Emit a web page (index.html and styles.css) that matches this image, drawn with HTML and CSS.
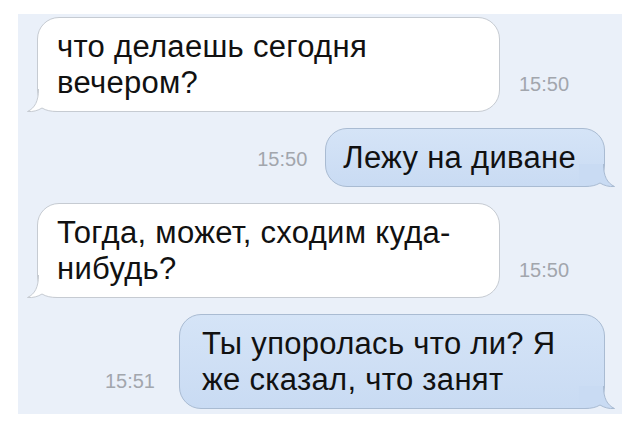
FILE: index.html
```html
<!DOCTYPE html>
<html lang="ru">
<head>
  <meta charset="UTF-8" />
  <meta name="viewport" content="width=device-width, initial-scale=1.0"/>
  <title>Сообщения</title>
  <link rel="stylesheet" href="styles.css">
</head>
<body>
  <div class="chat">
    <div class="row in">
      <div class="bubble wide">
        <span class="text">что делаешь сегодня вечером?</span>
        <svg class="tail" width="36" height="23" viewBox="0 0 36 23">
          <path class="tail-fill" d="M11.5 0 C11.5 12 8 19 0.5 22.5 C6 23 11 21.5 15 19 C19 21.5 24 22.5 30 22.5 L36 22.5 L36 0 Z"/>
          <path class="tail-line" d="M11.5 0 C11.5 12 8 19 0.5 22.5 C6 23 11 21.5 15 19 C19 21.5 24 22.5 30 22.5 L36 22.5"/>
        </svg>
      </div>
      <span class="time">15:50</span>
    </div>

    <div class="row out">
      <span class="time">15:50</span>
      <div class="bubble">
        <span class="text">Лежу на диване</span>
        <svg class="tail" width="36" height="23" viewBox="0 0 36 23">
          <path class="tail-fill" d="M11.5 0 C11.5 12 8 19 0.5 22.5 C6 23 11 21.5 15 19 C19 21.5 24 22.5 30 22.5 L36 22.5 L36 0 Z"/>
          <path class="tail-line" d="M11.5 0 C11.5 12 8 19 0.5 22.5 C6 23 11 21.5 15 19 C19 21.5 24 22.5 30 22.5 L36 22.5"/>
        </svg>
      </div>
    </div>

    <div class="row in">
      <div class="bubble wide">
        <span class="text">Тогда, может, сходим куда-нибудь?</span>
        <svg class="tail" width="36" height="23" viewBox="0 0 36 23">
          <path class="tail-fill" d="M11.5 0 C11.5 12 8 19 0.5 22.5 C6 23 11 21.5 15 19 C19 21.5 24 22.5 30 22.5 L36 22.5 L36 0 Z"/>
          <path class="tail-line" d="M11.5 0 C11.5 12 8 19 0.5 22.5 C6 23 11 21.5 15 19 C19 21.5 24 22.5 30 22.5 L36 22.5"/>
        </svg>
      </div>
      <span class="time">15:50</span>
    </div>

    <div class="row out last">
      <span class="time">15:51</span>
      <div class="bubble long">
        <span class="text">Ты упоролась что ли? Я же сказал, что занят</span>
        <svg class="tail" width="36" height="23" viewBox="0 0 36 23">
          <path class="tail-fill" d="M11.5 0 C11.5 12 8 19 0.5 22.5 C6 23 11 21.5 15 19 C19 21.5 24 22.5 30 22.5 L36 22.5 L36 0 Z"/>
          <path class="tail-line" d="M11.5 0 C11.5 12 8 19 0.5 22.5 C6 23 11 21.5 15 19 C19 21.5 24 22.5 30 22.5 L36 22.5"/>
        </svg>
      </div>
    </div>
  </div>
</body>
</html>
```

FILE: styles.css
```css
body {
  margin: 0;
  background: #ffffff;
  font-family: "Liberation Sans", Arial, sans-serif;
}
.chat {
  margin: 14px 18px 0;
  padding: 3px 0 5px;
  background: #eaf0f9;
  display: flex;
  flex-direction: column;
  gap: 16px;
}
.row {
  display: flex;
  align-items: flex-end;
}
.row.in {
  padding-left: 19px;
}
.row.out {
  justify-content: flex-end;
  padding-right: 17px;
}
.bubble {
  position: relative;
  box-sizing: border-box;
  padding: 11px 28px 10px 19px;
  border: 1px solid #c6cbd2;
  border-radius: 22px;
  background: #ffffff;
  color: #111;
  font-size: 31px;
  letter-spacing: 0.3px;
  line-height: 36px;
}
.bubble .text {
  position: relative;
  z-index: 1;
}
.bubble.wide {
  width: 463px;
}
.out .bubble {
  padding-left: 17px;
  border-color: #a9bbd2;
  background: linear-gradient(#d5e4f7, #c9dbf3);
}
.out .bubble.long {
  width: 426px;
  padding-left: 22px;
  padding-right: 32px;
}
.tail {
  position: absolute;
  left: -11px;
  bottom: -1px;
  overflow: visible;
}
.out .tail {
  left: auto;
  right: -11px;
  transform: scaleX(-1);
}
.tail-fill {
  fill: #ffffff;
}
.out .tail-fill {
  fill: #c9dbf3;
}
.tail-line {
  fill: none;
  stroke: #c6cbd2;
  stroke-width: 1;
}
.out .tail-line {
  stroke: #a9bbd2;
}
.time {
  padding-bottom: 10px;
  font-size: 20px;
  line-height: 36px;
  color: #a2a6ad;
}
.in .time {
  margin-left: 19px;
}
.out .time {
  margin-right: 18px;
}
.last .time {
  margin-right: 24px;
}
```
